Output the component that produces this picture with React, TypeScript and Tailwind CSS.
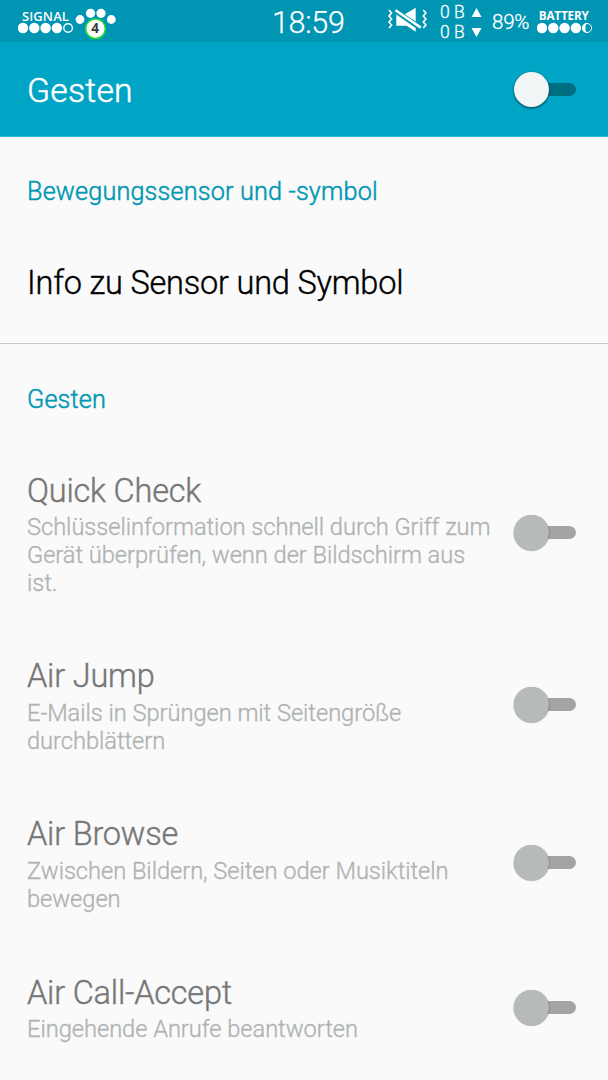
import clsx from 'clsx'

type Gesture = {
  title: string
  lines: string[]
}

const gestures: Gesture[] = [
  {
    title: 'Quick Check',
    lines: [
      'Schlüsselinformation schnell durch Griff zum',
      'Gerät überprüfen, wenn der Bildschirm aus',
      'ist.',
    ],
  },
  {
    title: 'Air Jump',
    lines: ['E-Mails in Sprüngen mit Seitengröße', 'durchblättern'],
  },
  {
    title: 'Air Browse',
    lines: ['Zwischen Bildern, Seiten oder Musiktiteln', 'bewegen'],
  },
  {
    title: 'Air Call-Accept',
    lines: ['Eingehende Anrufe beantworten'],
  },
]

function Toggle({ disabled = false }: { disabled?: boolean }) {
  return (
    <button
      type="button"
      role="switch"
      aria-checked={false}
      disabled={disabled}
      className="flex h-9 w-[62px] shrink-0 items-center"
    >
      <span
        className={clsx(
          'z-10 size-[35px] shrink-0 rounded-full',
          disabled
            ? 'bg-[#b7baba] shadow-[0_0.5px_1px_0.5px_rgba(0,0,0,0.3)]'
            : 'bg-[#f2f5f5] shadow-[0_1px_2px_0.5px_rgba(0,0,0,0.45)]'
        )}
      />
      <span
        className={clsx(
          '-ml-3 h-[13px] flex-1 rounded-full',
          disabled ? 'bg-[#a4a4a4]' : 'bg-[#006e82]'
        )}
      />
    </button>
  )
}

function SignalIcon() {
  return (
    <svg className="block h-[12px] w-[56px]" viewBox="0 0 56 12" fill="#fff">
      <circle cx="5" cy="6" r="5.2" />
      <circle cx="16.3" cy="6" r="5.2" />
      <circle cx="27.6" cy="6" r="5.2" />
      <circle cx="38.9" cy="6" r="5.2" />
      <circle cx="50.1" cy="6" r="4.3" fill="none" stroke="#fff" strokeWidth="1.4" />
    </svg>
  )
}

function BatteryIcon() {
  return (
    <svg className="block h-[12px] w-[56px]" viewBox="0 0 56 12" fill="#fff">
      <circle cx="5" cy="6" r="5.2" />
      <circle cx="16.3" cy="6" r="5.2" />
      <circle cx="27.6" cy="6" r="5.2" />
      <circle cx="38.9" cy="6" r="5.2" />
      <circle cx="50.1" cy="6" r="4.5" fill="none" stroke="#fff" strokeWidth="1" />
      <path d="M50 1a5 5 0 0 0 0 10l-1.5-2.5v-5z" />
    </svg>
  )
}

function PawIcon() {
  return (
    <svg className="block h-[42px] w-[42px]" viewBox="0 0 42 42" fill="#fff">
      <circle cx="5" cy="19.5" r="4.4" />
      <circle cx="15.5" cy="13.3" r="4.6" />
      <circle cx="26" cy="13.3" r="4.6" />
      <circle cx="36.3" cy="19.5" r="4.4" />
      <circle cx="20.5" cy="28.7" r="9.8" stroke="#20e02c" strokeWidth="1.5" />
      <text
        x="20"
        y="33.4"
        textAnchor="middle"
        className="fill-[#3c3c3c] font-['Open_Sans',sans-serif] text-[13.5px] font-bold"
      >
        4
      </text>
    </svg>
  )
}

function VibrateMuteIcon() {
  return (
    <svg className="block h-[26px] w-[40px]" viewBox="0 0 40 26" fill="#fff">
      <g fill="none" stroke="#fff" strokeWidth="1.6">
        <path d="M2 3l2.6 3-2.6 3 2.6 3-2.6 3 2.6 3-2.6 3" />
        <path d="M36.3 3l2.6 3-2.6 3 2.6 3-2.6 3 2.6 3-2.6 3" />
        <path d="M8.6 3.2L33.8 20.6" strokeWidth="2.5" />
      </g>
      <path d="M17.8 7.2L28.7.8v13.8z" />
      <path d="M9.3 7.6L28.7 21v3.7l-9-6H9.3z" />
    </svg>
  )
}

function StatusBar() {
  return (
    <div className="flex h-[42px] items-start bg-[#0095b3] text-white">
      <div className="ml-[18px] w-[56px] pt-[10px]">
        <div className="pl-[4px] font-['Open_Sans',sans-serif] text-[13px]/[12px] font-semibold tracking-[0.1px]">
          SIGNAL
        </div>
        <SignalIcon />
      </div>
      <div className="ml-px">
        <PawIcon />
      </div>
      <div className="ml-[155px] w-[75px] pt-[5px] text-[30.5px]/[35px] font-light tracking-[-0.3px] whitespace-nowrap [-webkit-text-stroke:0.25px]">
        18:59
      </div>
      <div className="ml-[40px] pt-[7px]">
        <VibrateMuteIcon />
      </div>
      <div className="ml-[13px] w-[44px] pt-[2px] text-[17.5px]/[20px] font-light whitespace-nowrap [-webkit-text-stroke:0.3px]">
        {['M5 0L10 9H0z', 'M5 9L10 0H0z'].map((d) => (
          <div key={d} className="flex h-5 items-center">
            <span className="w-[31px]">0 B</span>
            <svg className="h-[9px] w-[11px]" viewBox="0 0 10 9" fill="#fff">
              <path d={d} />
            </svg>
          </div>
        ))}
      </div>
      <div className="ml-[8px] w-[45px] pt-[9px] text-[20.5px]/[26px] font-light tracking-[-0.2px] whitespace-nowrap [-webkit-text-stroke:0.3px]">
        89%
      </div>
      <div className="w-[56px] pt-[8px]">
        <div className="origin-left scale-x-[0.9] pl-[2px] font-['Open_Sans',sans-serif] text-[13px]/[14px] font-bold tracking-[-0.2px]">
          BATTERY
        </div>
        <BatteryIcon />
      </div>
    </div>
  )
}

function SectionTitle({ children }: { children: string }) {
  return (
    <h2 className="text-[25.2px]/[29px] font-light tracking-[0.18px] whitespace-nowrap text-[#0097b4] [-webkit-text-stroke:0.5px]">
      {children}
    </h2>
  )
}

export default function App() {
  return (
    <div className="h-[1080px] w-[608px] overflow-hidden bg-[#fafafa] font-[Roboto,sans-serif]">
      <StatusBar />
      <header className="flex h-[95px] items-center justify-between border-b border-[#33b6cf] bg-[#00a5c5] pr-8 pl-[27px]">
        <h1 className="pt-[3px] text-[33.7px]/[40px] font-light tracking-[0.25px] text-white [-webkit-text-stroke:0.5px]">
          Gesten
        </h1>
        <Toggle />
      </header>

      <main>
        <section className="h-[207px] border-b border-[#c9c9c9] px-[27px] pt-[40px]">
          <SectionTitle>Bewegungssensor und -symbol</SectionTitle>
          <p className="pt-[57px] text-[32.5px]/[40px] font-light tracking-[-0.2px] whitespace-nowrap text-black [-webkit-text-stroke:0.4px]">
            Info zu Sensor und Symbol
          </p>
        </section>

        <section className="pt-[41px] pr-8 pl-[27px]">
          <SectionTitle>Gesten</SectionTitle>
          <ul className="pt-[26px]">
            {gestures.map((g) => (
              <li key={g.title} className="flex items-center justify-between py-[28.5px]">
                <div className="whitespace-nowrap">
                  <h3 className="text-[32.5px]/[44.4px] font-light tracking-[-0.2px] text-[#777] [-webkit-text-stroke:0.4px]">
                    {g.title}
                  </h3>
                  <div className="pt-[1.3px]">
                    {g.lines.map((line) => (
                      <p
                        key={line}
                        className="text-[23.7px]/[27.7px] font-light tracking-[-0.05px] text-[#b0b3b3] [-webkit-text-stroke:0.35px]"
                      >
                        {line}
                      </p>
                    ))}
                  </div>
                </div>
                <Toggle disabled />
              </li>
            ))}
          </ul>
        </section>
      </main>
    </div>
  )
}
